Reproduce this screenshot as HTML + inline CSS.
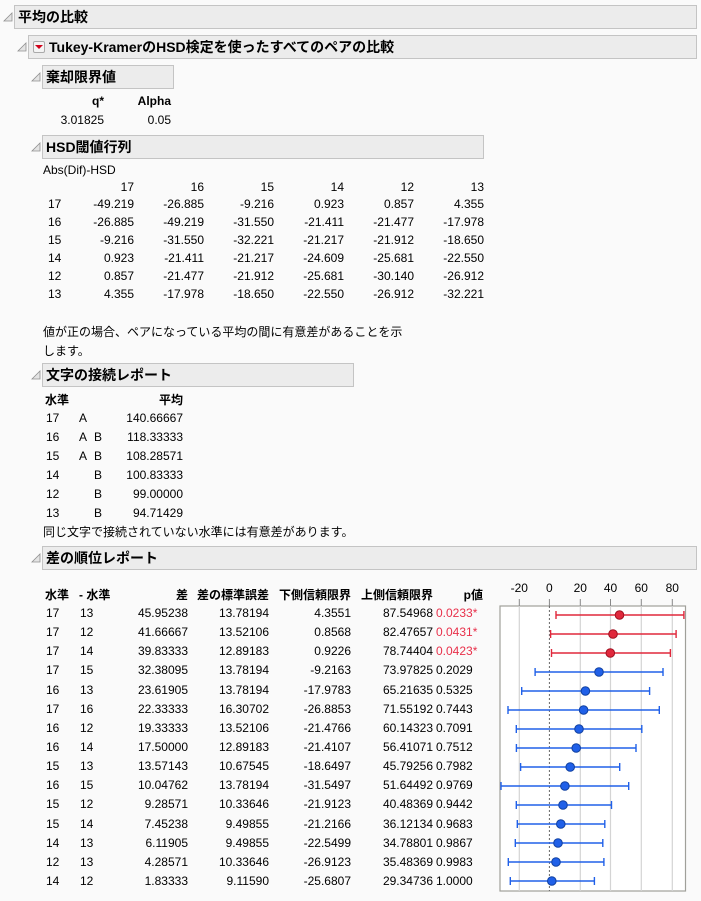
<!DOCTYPE html>
<html><head><meta charset="utf-8"><style>
body{margin:0;background:#fafafa;}
#c{position:relative;width:701px;height:901px;overflow:hidden;font-family:"Liberation Sans","Noto Sans CJK JP",sans-serif;font-size:12px;color:#000;}
.t{position:absolute;line-height:14px;white-space:nowrap;}
.b{font-weight:bold;}
.h{position:absolute;background:#ececec;border:1px solid #c4c4c4;box-sizing:border-box;font-weight:bold;font-size:14px;line-height:22px;padding-left:3px;white-space:nowrap;}
.red{color:#e8304a;}
svg{position:absolute;left:0;top:0;}
</style></head><body><div id="c">
<svg width="701" height="901">
<g fill="#e4e4e4" stroke="#909090" stroke-width="0.8">
<polygon points="12,13 12,21 4,21"/>
<polygon points="26,43 26,51 18,51"/>
<polygon points="40,73 40,81 32,81"/>
<polygon points="40,143 40,151 32,151"/>
<polygon points="40,371 40,379 32,379"/>
<polygon points="40,554 40,562 32,562"/>
</g>
</svg>
<div class="h" style="left:14px;top:5px;width:683px;height:24px;">平均の比較</div>
<div class="h" style="left:28px;top:35px;width:669px;height:24px;padding-left:20px;">Tukey-KramerのHSD検定を使ったすべてのペアの比較</div>
<div style="position:absolute;left:33px;top:41px;width:12px;height:12px;border:1px solid #aaa;box-sizing:border-box;background:#f4f4f4;border-radius:2px;"></div>
<div style="position:absolute;left:35px;top:45px;width:0;height:0;border-left:4px solid transparent;border-right:4px solid transparent;border-top:4px solid #d0021b;"></div>
<div class="h" style="left:42px;top:65px;width:132px;height:24px;">棄却限界値</div>
<div class="h" style="left:42px;top:135px;width:442px;height:24px;">HSD閾値行列</div>
<div class="h" style="left:42px;top:363px;width:312px;height:24px;">文字の接続レポート</div>
<div class="h" style="left:42px;top:546px;width:655px;height:24px;">差の順位レポート</div>

<div class="t b" style="right:597px;top:94px;">q*</div>
<div class="t b" style="right:530px;top:94px;">Alpha</div>
<div class="t" style="right:597px;top:113px;">3.01825</div>
<div class="t" style="right:530px;top:113px;">0.05</div>

<div class="t" style="left:43px;top:163px;">Abs(Dif)-HSD</div>
<div class="t" style="right:567px;top:180px;">17</div><div class="t" style="right:497px;top:180px;">16</div><div class="t" style="right:427px;top:180px;">15</div><div class="t" style="right:357px;top:180px;">14</div><div class="t" style="right:287px;top:180px;">12</div><div class="t" style="right:217px;top:180px;">13</div>

<div class="t" style="left:48px;top:197px;">17</div><div class="t" style="right:567px;top:197px;">-49.219</div><div class="t" style="right:497px;top:197px;">-26.885</div><div class="t" style="right:427px;top:197px;">-9.216</div><div class="t" style="right:357px;top:197px;">0.923</div><div class="t" style="right:287px;top:197px;">0.857</div><div class="t" style="right:217px;top:197px;">4.355</div>
<div class="t" style="left:48px;top:215px;">16</div><div class="t" style="right:567px;top:215px;">-26.885</div><div class="t" style="right:497px;top:215px;">-49.219</div><div class="t" style="right:427px;top:215px;">-31.550</div><div class="t" style="right:357px;top:215px;">-21.411</div><div class="t" style="right:287px;top:215px;">-21.477</div><div class="t" style="right:217px;top:215px;">-17.978</div>
<div class="t" style="left:48px;top:233px;">15</div><div class="t" style="right:567px;top:233px;">-9.216</div><div class="t" style="right:497px;top:233px;">-31.550</div><div class="t" style="right:427px;top:233px;">-32.221</div><div class="t" style="right:357px;top:233px;">-21.217</div><div class="t" style="right:287px;top:233px;">-21.912</div><div class="t" style="right:217px;top:233px;">-18.650</div>
<div class="t" style="left:48px;top:251px;">14</div><div class="t" style="right:567px;top:251px;">0.923</div><div class="t" style="right:497px;top:251px;">-21.411</div><div class="t" style="right:427px;top:251px;">-21.217</div><div class="t" style="right:357px;top:251px;">-24.609</div><div class="t" style="right:287px;top:251px;">-25.681</div><div class="t" style="right:217px;top:251px;">-22.550</div>
<div class="t" style="left:48px;top:269px;">12</div><div class="t" style="right:567px;top:269px;">0.857</div><div class="t" style="right:497px;top:269px;">-21.477</div><div class="t" style="right:427px;top:269px;">-21.912</div><div class="t" style="right:357px;top:269px;">-25.681</div><div class="t" style="right:287px;top:269px;">-30.140</div><div class="t" style="right:217px;top:269px;">-26.912</div>
<div class="t" style="left:48px;top:287px;">13</div><div class="t" style="right:567px;top:287px;">4.355</div><div class="t" style="right:497px;top:287px;">-17.978</div><div class="t" style="right:427px;top:287px;">-18.650</div><div class="t" style="right:357px;top:287px;">-22.550</div><div class="t" style="right:287px;top:287px;">-26.912</div><div class="t" style="right:217px;top:287px;">-32.221</div>

<div class="t" style="left:43px;top:325px;">値が正の場合、ペアになっている平均の間に有意差があることを示</div>
<div class="t" style="left:43px;top:344px;">します。</div>

<div class="t b" style="left:45px;top:393px;">水準</div>
<div class="t b" style="right:518px;top:393px;">平均</div>
<div class="t" style="left:46px;top:411px;">17</div><div class="t" style="left:79px;top:411px;">A</div><div class="t" style="right:518px;top:411px;">140.66667</div>
<div class="t" style="left:46px;top:430px;">16</div><div class="t" style="left:79px;top:430px;">A</div><div class="t" style="left:94px;top:430px;">B</div><div class="t" style="right:518px;top:430px;">118.33333</div>
<div class="t" style="left:46px;top:449px;">15</div><div class="t" style="left:79px;top:449px;">A</div><div class="t" style="left:94px;top:449px;">B</div><div class="t" style="right:518px;top:449px;">108.28571</div>
<div class="t" style="left:46px;top:468px;">14</div><div class="t" style="left:94px;top:468px;">B</div><div class="t" style="right:518px;top:468px;">100.83333</div>
<div class="t" style="left:46px;top:487px;">12</div><div class="t" style="left:94px;top:487px;">B</div><div class="t" style="right:518px;top:487px;">99.00000</div>
<div class="t" style="left:46px;top:506px;">13</div><div class="t" style="left:94px;top:506px;">B</div><div class="t" style="right:518px;top:506px;">94.71429</div>
<div class="t" style="left:43px;top:525px;">同じ文字で接続されていない水準には有意差があります。</div>

<div class="t b" style="left:45px;top:588px;">水準</div>
<div class="t b" style="left:79px;top:588px;">- 水準</div>
<div class="t b" style="right:513px;top:588px;">差</div>
<div class="t b" style="right:432px;top:588px;">差の標準誤差</div>
<div class="t b" style="right:350px;top:588px;">下側信頼限界</div>
<div class="t b" style="right:268px;top:588px;">上側信頼限界</div>
<div class="t b" style="right:218px;top:588px;">p値</div>

<div class="t" style="left:46px;top:606px;">17</div><div class="t" style="left:80px;top:606px;">13</div><div class="t" style="right:513px;top:606px;">45.95238</div><div class="t" style="right:432px;top:606px;">13.78194</div><div class="t" style="right:350px;top:606px;">4.3551</div><div class="t" style="right:268px;top:606px;">87.54968</div><div class="t red" style="left:436px;top:606px;">0.0233*</div>
<div class="t" style="left:46px;top:625px;">17</div><div class="t" style="left:80px;top:625px;">12</div><div class="t" style="right:513px;top:625px;">41.66667</div><div class="t" style="right:432px;top:625px;">13.52106</div><div class="t" style="right:350px;top:625px;">0.8568</div><div class="t" style="right:268px;top:625px;">82.47657</div><div class="t red" style="left:436px;top:625px;">0.0431*</div>
<div class="t" style="left:46px;top:644px;">17</div><div class="t" style="left:80px;top:644px;">14</div><div class="t" style="right:513px;top:644px;">39.83333</div><div class="t" style="right:432px;top:644px;">12.89183</div><div class="t" style="right:350px;top:644px;">0.9226</div><div class="t" style="right:268px;top:644px;">78.74404</div><div class="t red" style="left:436px;top:644px;">0.0423*</div>
<div class="t" style="left:46px;top:663px;">17</div><div class="t" style="left:80px;top:663px;">15</div><div class="t" style="right:513px;top:663px;">32.38095</div><div class="t" style="right:432px;top:663px;">13.78194</div><div class="t" style="right:350px;top:663px;">-9.2163</div><div class="t" style="right:268px;top:663px;">73.97825</div><div class="t" style="left:436px;top:663px;">0.2029</div>
<div class="t" style="left:46px;top:683px;">16</div><div class="t" style="left:80px;top:683px;">13</div><div class="t" style="right:513px;top:683px;">23.61905</div><div class="t" style="right:432px;top:683px;">13.78194</div><div class="t" style="right:350px;top:683px;">-17.9783</div><div class="t" style="right:268px;top:683px;">65.21635</div><div class="t" style="left:436px;top:683px;">0.5325</div>
<div class="t" style="left:46px;top:702px;">17</div><div class="t" style="left:80px;top:702px;">16</div><div class="t" style="right:513px;top:702px;">22.33333</div><div class="t" style="right:432px;top:702px;">16.30702</div><div class="t" style="right:350px;top:702px;">-26.8853</div><div class="t" style="right:268px;top:702px;">71.55192</div><div class="t" style="left:436px;top:702px;">0.7443</div>
<div class="t" style="left:46px;top:721px;">16</div><div class="t" style="left:80px;top:721px;">12</div><div class="t" style="right:513px;top:721px;">19.33333</div><div class="t" style="right:432px;top:721px;">13.52106</div><div class="t" style="right:350px;top:721px;">-21.4766</div><div class="t" style="right:268px;top:721px;">60.14323</div><div class="t" style="left:436px;top:721px;">0.7091</div>
<div class="t" style="left:46px;top:740px;">16</div><div class="t" style="left:80px;top:740px;">14</div><div class="t" style="right:513px;top:740px;">17.50000</div><div class="t" style="right:432px;top:740px;">12.89183</div><div class="t" style="right:350px;top:740px;">-21.4107</div><div class="t" style="right:268px;top:740px;">56.41071</div><div class="t" style="left:436px;top:740px;">0.7512</div>
<div class="t" style="left:46px;top:759px;">15</div><div class="t" style="left:80px;top:759px;">13</div><div class="t" style="right:513px;top:759px;">13.57143</div><div class="t" style="right:432px;top:759px;">10.67545</div><div class="t" style="right:350px;top:759px;">-18.6497</div><div class="t" style="right:268px;top:759px;">45.79256</div><div class="t" style="left:436px;top:759px;">0.7982</div>
<div class="t" style="left:46px;top:778px;">16</div><div class="t" style="left:80px;top:778px;">15</div><div class="t" style="right:513px;top:778px;">10.04762</div><div class="t" style="right:432px;top:778px;">13.78194</div><div class="t" style="right:350px;top:778px;">-31.5497</div><div class="t" style="right:268px;top:778px;">51.64492</div><div class="t" style="left:436px;top:778px;">0.9769</div>
<div class="t" style="left:46px;top:797px;">15</div><div class="t" style="left:80px;top:797px;">12</div><div class="t" style="right:513px;top:797px;">9.28571</div><div class="t" style="right:432px;top:797px;">10.33646</div><div class="t" style="right:350px;top:797px;">-21.9123</div><div class="t" style="right:268px;top:797px;">40.48369</div><div class="t" style="left:436px;top:797px;">0.9442</div>
<div class="t" style="left:46px;top:817px;">15</div><div class="t" style="left:80px;top:817px;">14</div><div class="t" style="right:513px;top:817px;">7.45238</div><div class="t" style="right:432px;top:817px;">9.49855</div><div class="t" style="right:350px;top:817px;">-21.2166</div><div class="t" style="right:268px;top:817px;">36.12134</div><div class="t" style="left:436px;top:817px;">0.9683</div>
<div class="t" style="left:46px;top:836px;">14</div><div class="t" style="left:80px;top:836px;">13</div><div class="t" style="right:513px;top:836px;">6.11905</div><div class="t" style="right:432px;top:836px;">9.49855</div><div class="t" style="right:350px;top:836px;">-22.5499</div><div class="t" style="right:268px;top:836px;">34.78801</div><div class="t" style="left:436px;top:836px;">0.9867</div>
<div class="t" style="left:46px;top:855px;">12</div><div class="t" style="left:80px;top:855px;">13</div><div class="t" style="right:513px;top:855px;">4.28571</div><div class="t" style="right:432px;top:855px;">10.33646</div><div class="t" style="right:350px;top:855px;">-26.9123</div><div class="t" style="right:268px;top:855px;">35.48369</div><div class="t" style="left:436px;top:855px;">0.9983</div>
<div class="t" style="left:46px;top:874px;">14</div><div class="t" style="left:80px;top:874px;">12</div><div class="t" style="right:513px;top:874px;">1.83333</div><div class="t" style="right:432px;top:874px;">9.11590</div><div class="t" style="right:350px;top:874px;">-25.6807</div><div class="t" style="right:268px;top:874px;">29.34736</div><div class="t" style="left:436px;top:874px;">1.0000</div>

<svg width="701" height="901" style="pointer-events:none">
<rect x="500" y="606" width="185.5" height="285" fill="#fff" stroke="#a0a09a" stroke-width="1.2"/>
<g stroke="#d4d4d4" stroke-width="1.2">
<line x1="519.3" y1="606" x2="519.3" y2="891"/><line x1="580.3" y1="606" x2="580.3" y2="891"/><line x1="610.5" y1="606" x2="610.5" y2="891"/><line x1="641.3" y1="606" x2="641.3" y2="891"/><line x1="672.3" y1="606" x2="672.3" y2="891"/>
</g>
<g stroke="#888" stroke-width="1">
<line x1="519.3" y1="599" x2="519.3" y2="606"/><line x1="549.4" y1="599" x2="549.4" y2="606"/><line x1="580.3" y1="599" x2="580.3" y2="606"/><line x1="610.5" y1="599" x2="610.5" y2="606"/><line x1="641.3" y1="599" x2="641.3" y2="606"/><line x1="672.3" y1="599" x2="672.3" y2="606"/>
</g>
<line x1="549.4" y1="606" x2="549.4" y2="891" stroke="#666" stroke-width="1" stroke-dasharray="2,2"/>
<g font-family="Liberation Sans, sans-serif" font-size="12" text-anchor="middle" fill="#000">
<text x="519.3" y="592">-20</text><text x="549.4" y="592">0</text><text x="580.3" y="592">20</text><text x="610.5" y="592">40</text><text x="641.3" y="592">60</text><text x="672.3" y="592">80</text>
</g>
<g stroke-width="1.4">
<g stroke="#e0283c"><line x1="556" y1="615" x2="683.9" y2="615"/><line x1="556" y1="611" x2="556" y2="619"/><line x1="683.9" y1="611" x2="683.9" y2="619"/></g>
<g stroke="#e0283c"><line x1="550.6" y1="634" x2="676.1" y2="634"/><line x1="550.6" y1="630" x2="550.6" y2="638"/><line x1="676.1" y1="630" x2="676.1" y2="638"/></g>
<g stroke="#e0283c"><line x1="551.5" y1="653" x2="670.4" y2="653"/><line x1="551.5" y1="649" x2="551.5" y2="657"/><line x1="670.4" y1="649" x2="670.4" y2="657"/></g>
<g stroke="#2060e8">
<line x1="535.1" y1="672" x2="663" y2="672"/><line x1="535.1" y1="668" x2="535.1" y2="676"/><line x1="663" y1="668" x2="663" y2="676"/>
<line x1="521.7" y1="691" x2="649.6" y2="691"/><line x1="521.7" y1="687" x2="521.7" y2="695"/><line x1="649.6" y1="687" x2="649.6" y2="695"/>
<line x1="508" y1="710" x2="659.3" y2="710"/><line x1="508" y1="706" x2="508" y2="714"/><line x1="659.3" y1="706" x2="659.3" y2="714"/>
<line x1="516.3" y1="729" x2="641.8" y2="729"/><line x1="516.3" y1="725" x2="516.3" y2="733"/><line x1="641.8" y1="725" x2="641.8" y2="733"/>
<line x1="516.4" y1="748" x2="636" y2="748"/><line x1="516.4" y1="744" x2="516.4" y2="752"/><line x1="636" y1="744" x2="636" y2="752"/>
<line x1="520.6" y1="767" x2="619.7" y2="767"/><line x1="520.6" y1="763" x2="520.6" y2="771"/><line x1="619.7" y1="763" x2="619.7" y2="771"/>
<line x1="501" y1="786" x2="628.7" y2="786"/><line x1="501" y1="782" x2="501" y2="790"/><line x1="628.7" y1="782" x2="628.7" y2="790"/>
<line x1="516.3" y1="805" x2="611.5" y2="805"/><line x1="516.3" y1="801" x2="516.3" y2="809"/><line x1="611.5" y1="801" x2="611.5" y2="809"/>
<line x1="517.3" y1="824" x2="604.8" y2="824"/><line x1="517.3" y1="820" x2="517.3" y2="828"/><line x1="604.8" y1="820" x2="604.8" y2="828"/>
<line x1="515.3" y1="843" x2="602.8" y2="843"/><line x1="515.3" y1="839" x2="515.3" y2="847"/><line x1="602.8" y1="839" x2="602.8" y2="847"/>
<line x1="508.3" y1="862" x2="603.9" y2="862"/><line x1="508.3" y1="858" x2="508.3" y2="866"/><line x1="603.9" y1="858" x2="603.9" y2="866"/>
<line x1="510.3" y1="881" x2="594.4" y2="881"/><line x1="510.3" y1="877" x2="510.3" y2="885"/><line x1="594.4" y1="877" x2="594.4" y2="885"/>
</g>
</g>
<g fill="#e0283c" stroke="#a01020" stroke-width="1"><circle cx="619.5" cy="615" r="4.3"/><circle cx="613" cy="634" r="4.3"/><circle cx="610.3" cy="653" r="4.3"/></g>
<g fill="#2060e8" stroke="#1040a0" stroke-width="1">
<circle cx="599" cy="672" r="4.3"/><circle cx="585.4" cy="691" r="4.3"/><circle cx="583.6" cy="710" r="4.3"/><circle cx="579" cy="729" r="4.3"/><circle cx="576.2" cy="748" r="4.3"/><circle cx="570.2" cy="767" r="4.3"/><circle cx="564.9" cy="786" r="4.3"/><circle cx="563" cy="805" r="4.3"/><circle cx="560.8" cy="824" r="4.3"/><circle cx="558" cy="843" r="4.3"/><circle cx="556" cy="862" r="4.3"/><circle cx="551.8" cy="881" r="4.3"/>
</g>
</svg>
</div></body></html>
